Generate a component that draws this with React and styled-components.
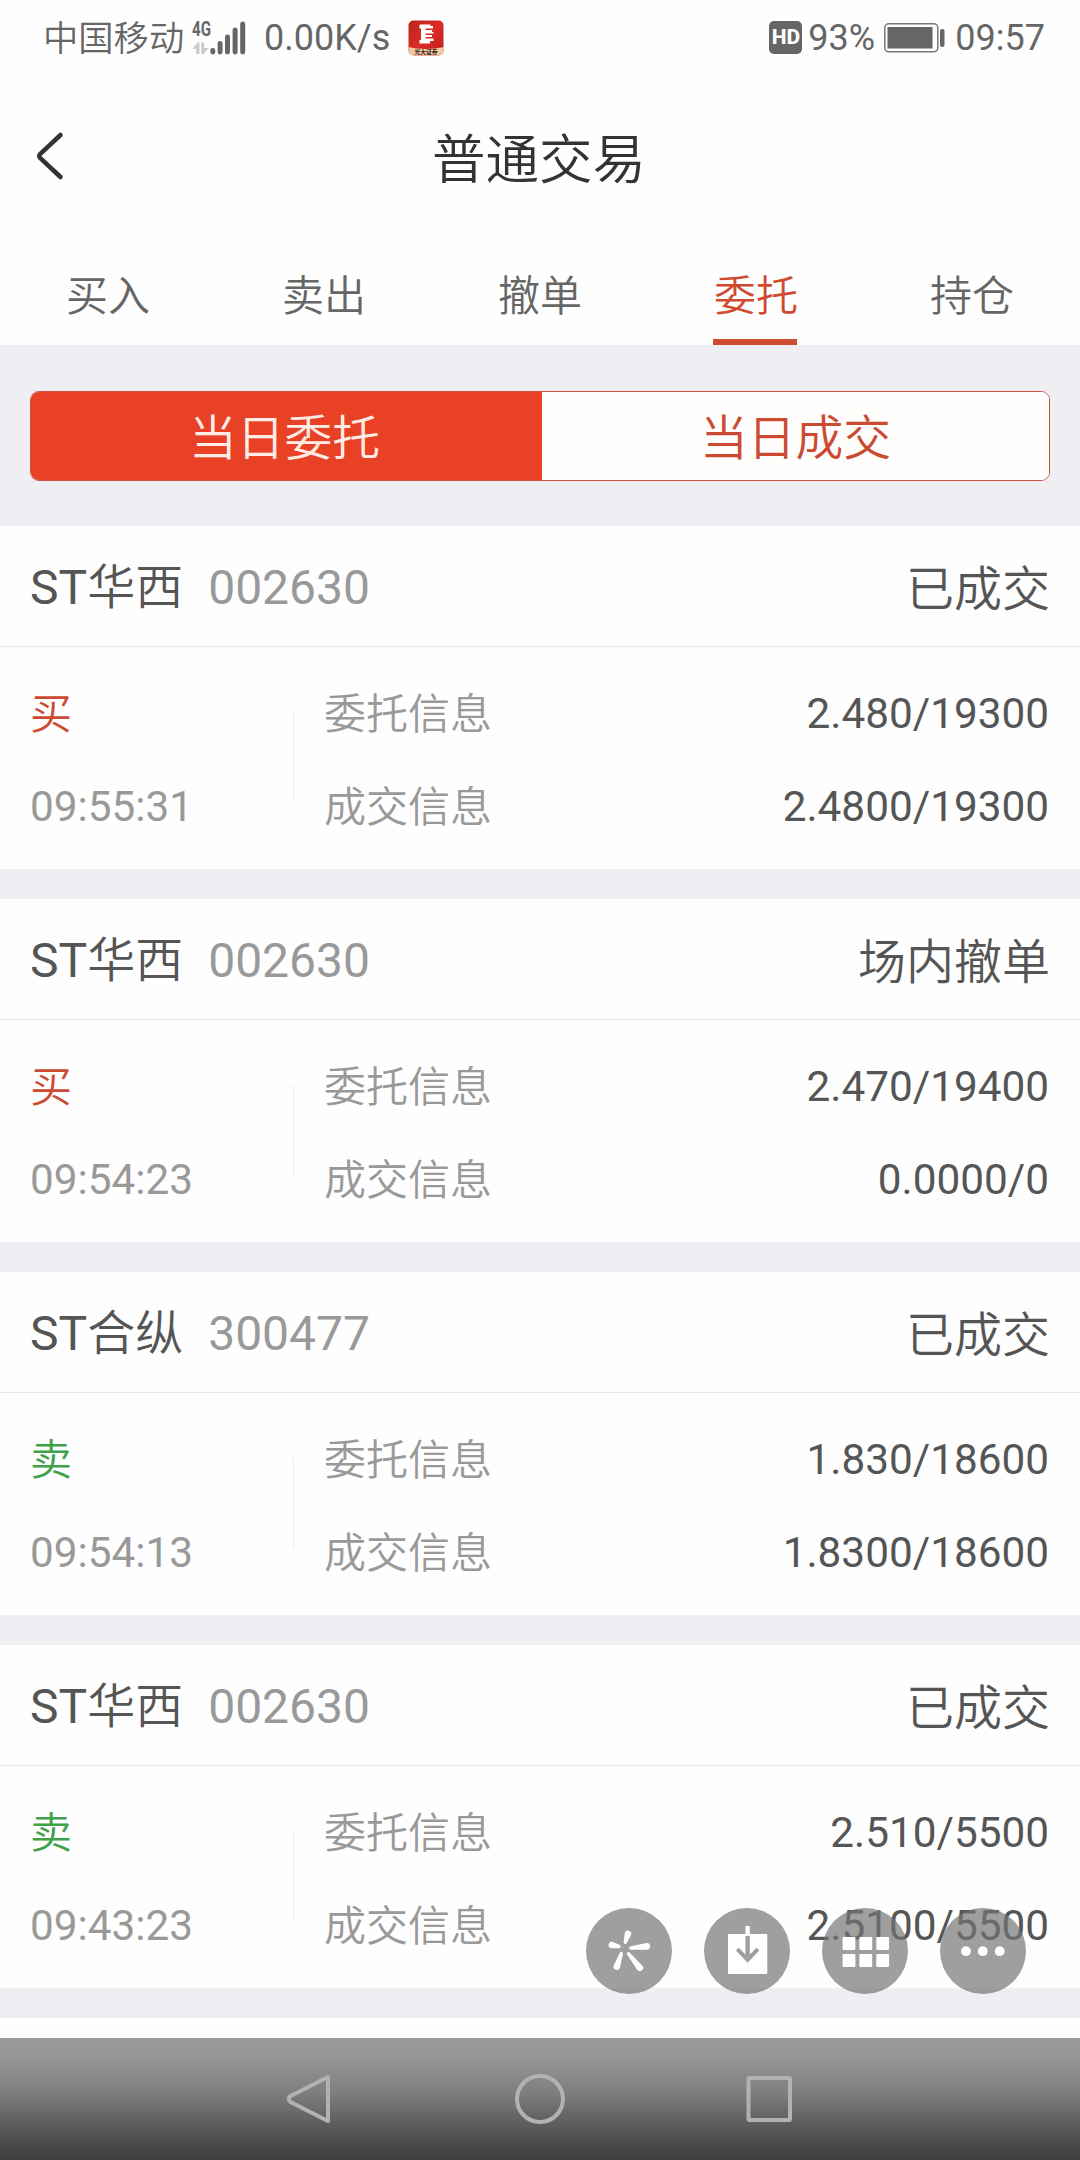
import React from "react";
import styled, { createGlobalStyle } from "styled-components";

const GlobalStyle = createGlobalStyle`
  * { box-sizing: border-box; }
  html, body { margin: 0; padding: 0; background: #fefefe; }
  body { font-family: Roboto, "Noto Sans CJK SC", sans-serif; }
`;

const Screen = styled.div`
  position: relative;
  display: flex;
  flex-direction: column;
  width: 1080px;
  height: 2160px;
  overflow: hidden;
  background: #fefefe;
`;

const Latin = styled.span`
  font-weight: 400;
`;

const StatusBar = styled.header`
  display: flex;
  justify-content: space-between;
  align-items: center;
  height: 75px;
  padding: 0 35px 0 43px;
  color: #666;
  font-size: 36px;
  line-height: 44px;
  white-space: nowrap;
`;

const StatusGroup = styled.div`
  display: flex;
  align-items: center;
`;

const Carrier = styled.span`
  width: 147px;
  padding-top: 2px;
  font-size: 35.3px;
  font-weight: 350;
`;

const Signal = styled.svg`
  width: 56px;
  height: 36px;
  margin-right: 18px;
  overflow: visible;
`;

const Speed = styled.span`
  width: 144px;
`;

const BrokerIcon = styled.svg`
  width: 36px;
  height: 36px;
`;

const HdBadge = styled.span`
  display: flex;
  align-items: center;
  justify-content: center;
  width: 33px;
  height: 33px;
  margin-right: 6px;
  border-radius: 5px;
  background: #666;
  color: #fff;
  font-size: 21px;
  font-weight: 800;
  line-height: 33px;
`;

const Percent = styled.span`
  width: 76px;
`;

const Battery = styled.svg`
  width: 61px;
  height: 30px;
  margin-right: 10px;
`;

const TitleBar = styled.div`
  display: grid;
  grid-template-columns: 100px 1fr 102px;
  align-items: center;
  height: 165px;
`;

const BackButton = styled.button`
  display: flex;
  padding: 0 0 3px 34px;
  border: 0;
  background: none;
`;

const Title = styled.h1`
  margin: 0;
  padding-top: 6px;
  color: #333;
  font-size: 53.5px;
  font-weight: 350;
  line-height: 80px;
  text-align: center;
`;

const Tabs = styled.nav`
  display: flex;
  height: 105px;
`;

const Tab = styled.div`
  display: flex;
  flex: 1;
  justify-content: center;
`;

const TabLabel = styled.span`
  width: 84px;
  height: 105px;
  margin: 0 1px 0 -1px;
  padding-top: 4px;
  border-bottom: 6px solid ${(p) => (p.$active ? "#d04a2f" : "transparent")};
  color: ${(p) => (p.$active ? "#d04a2f" : "#666")};
  font-size: 42px;
  font-weight: 350;
  line-height: 106px;
  text-indent: 1px;
  white-space: nowrap;
`;

const SegmentArea = styled.section`
  height: 181px;
  padding: 46px 30px 45px;
  background: #efeff3;
`;

const Segmented = styled.div`
  display: flex;
  height: 90px;
  overflow: hidden;
  border: 1px solid #c9533f;
  border-radius: 9px;
  background: #fffefd;
`;

const Segment = styled.button`
  flex: 1 1 ${(p) => (p.$active ? "4px" : "0")};
  padding: 7px ${(p) => (p.$active ? "4px" : "0")} 0 0;
  border: 0;
  background: ${(p) => (p.$active ? "#e84125" : "#fffefd")};
  color: ${(p) => (p.$active ? "#ffece4" : "#cb4a32")};
  font: 350 47.8px/81px Roboto, "Noto Sans CJK SC", sans-serif;
`;

const List = styled.main`
  display: flex;
  flex: 1;
  flex-direction: column;
  gap: 30px;
  min-height: 0;
  overflow: hidden;
  background: #efeff3;
`;

const Card = styled.article`
  flex: none;
  height: 343px;
  background: #fefefe;
`;

const CardHead = styled.div`
  display: flex;
  align-items: center;
  justify-content: space-between;
  height: 121px;
  padding: 4px 30px 0;
  border-bottom: 1px solid #e9e9e9;
  color: #555;
  font-size: 48px;
  font-weight: 350;
  line-height: 70px;
`;

const Stock = styled.div`
  display: flex;
  gap: 25px;
`;

const Code = styled.span`
  color: #999;
  font-weight: 400;
`;

const Status = styled.span`
  padding-top: 3px;
`;

const CardBody = styled.div`
  display: grid;
  grid-template-columns: 264px 30px 1fr;
  padding: 20px 31px 16px 30px;
  font-size: 42.3px;
  line-height: 93px;
`;

const Column = styled.div`
  display: flex;
  flex-direction: column;
`;

const Side = styled.span`
  height: 93px;
  color: ${(p) => (p.$side === "买" ? "#cb4a32" : "#3fa24a")};
  font-size: 42px;
  font-weight: 350;
  line-height: 96px;
`;

const Time = styled.span`
  color: #999;
`;

const Divider = styled.div`
  width: 1px;
  height: 90px;
  margin-top: 45px;
  margin-left: -1px;
  background: #ececec;
`;

const InfoRow = styled.div`
  display: flex;
  justify-content: space-between;
  height: 93px;
`;

const Label = styled.span`
  color: #999;
  font-size: 42px;
  font-weight: 350;
  line-height: 96px;
`;

const Value = styled.span`
  color: #555;
`;

const FloatingTools = styled.div`
  position: absolute;
  top: 1908px;
  right: 54px;
  display: flex;
  gap: 32px;
`;

const Tool = styled.button`
  width: 86px;
  height: 86px;
  padding: 0;
  border: 0;
  border-radius: 50%;
  background: rgba(116, 116, 116, 0.69);
`;

const ToolIcon = styled.svg`
  display: block;
  width: 86px;
  height: 86px;
  fill: #fff;
`;

const SystemNav = styled.footer`
  display: flex;
  flex: none;
  align-items: center;
  gap: 181px;
  height: 122px;
  padding-left: 284px;
  background: linear-gradient(#999 0%, #979797 12%, #8e8e8e 27%, #7e7e7e 45%, #5e5e5e 70%, #4a4a4a 86%, #3f3f3f 100%);
`;

const NavIcon = styled.svg`
  width: 50px;
  height: 50px;
  fill: none;
  stroke: #b2b2b2;
  stroke-width: 4;
  stroke-linejoin: round;
`;

const tabs = ["买入", "卖出", "撤单", "委托", "持仓"];

const orders = [
  { name: "华西", code: "002630", status: "已成交", side: "买", time: "09:55:31", ordered: "2.480/19300", filled: "2.4800/19300" },
  { name: "华西", code: "002630", status: "场内撤单", side: "买", time: "09:54:23", ordered: "2.470/19400", filled: "0.0000/0" },
  { name: "合纵", code: "300477", status: "已成交", side: "卖", time: "09:54:13", ordered: "1.830/18600", filled: "1.8300/18600" },
  { name: "华西", code: "002630", status: "已成交", side: "卖", time: "09:43:23", ordered: "2.510/5500", filled: "2.5100/5500" },
];

// Each ray runs from a narrow inner end to a rounded outer end.
const rays = [
  [39.3, 34.3, 41.9, 26],
  [33, 38.5, 25.8, 37],
  [45, 40, 60.8, 38.4],
  [35.3, 45.5, 30.8, 58.6],
  [42.5, 45.8, 53.8, 59.8],
];

function rayPath([x1, y1, x2, y2]) {
  const length = Math.hypot(x2 - x1, y2 - y1);
  const nx = -(y2 - y1) / length;
  const ny = (x2 - x1) / length;
  const a = 1.7;
  const b = 3.3;
  return `M${x1 + nx * a} ${y1 + ny * a}L${x2 + nx * b} ${y2 + ny * b}A${b} ${b} 0 0 0 ${x2 - nx * b} ${y2 - ny * b}L${x1 - nx * a} ${y1 - ny * a}A${a} ${a} 0 0 0 ${x1 + nx * a} ${y1 + ny * a}Z`;
}

function OrderCard({ order }) {
  return (
    <Card>
      <CardHead>
        <Stock>
          <span><Latin>ST</Latin>{order.name}</span>
          <Code>{order.code}</Code>
        </Stock>
        <Status>{order.status}</Status>
      </CardHead>
      <CardBody>
        <Column>
          <Side $side={order.side}>{order.side}</Side>
          <Time>{order.time}</Time>
        </Column>
        <Divider />
        <Column>
          <InfoRow><Label>委托信息</Label><Value>{order.ordered}</Value></InfoRow>
          <InfoRow><Label>成交信息</Label><Value>{order.filled}</Value></InfoRow>
        </Column>
      </CardBody>
    </Card>
  );
}

export default function App() {
  return (
    <>
      <GlobalStyle />
      <Screen>
        <StatusBar>
          <StatusGroup>
            <Carrier>中国移动</Carrier>
            <Signal viewBox="0 0 56 36">
              <text x="2" y="16" fontSize="21" fontWeight="700" fill="#666" textLength="19" lengthAdjust="spacingAndGlyphs">4G</text>
              <g fill="#ccc">
                <path d="M2.500 29l5-6.500h2V34H6.200v-5z" />
                <path d="M11.200 22.500h3V28h4.300l-5 6h-2.300z" />
              </g>
              <g fill="#666">
                <rect x="20.3" y="28" width="5" height="6.500" rx="2.4" />
                <rect x="27.600" y="21" width="5" height="13.500" rx="2.4" />
                <rect x="35" y="14.500" width="5" height="20" rx="2.4" />
                <rect x="42.600" y="7.500" width="5" height="27" rx="2.4" />
                <rect x="50.200" y="1.500" width="5" height="33" rx="2.4" />
              </g>
            </Signal>
            <Speed>0.00K/s</Speed>
            <BrokerIcon viewBox="0 0 36 36">
              <defs>
                <linearGradient id="brokerRed" x1="0" y1="0" x2="1" y2="1">
                  <stop offset="0" stopColor="#b8241f" />
                  <stop offset="0.5" stopColor="#dc2b26" />
                  <stop offset="1" stopColor="#b91d19" />
                </linearGradient>
                <clipPath id="brokerClip"><rect width="35" height="35" x="0.5" y="0.5" rx="5" /></clipPath>
              </defs>
              <g clipPath="url(#brokerClip)">
                <rect width="36" height="36" fill="url(#brokerRed)" />
                <path d="M0 27Q18 31 36 27V36H0Z" fill="#efc9a0" />
                <path d="M11.5 4.500H22.500V6H25V8.500H17.500V10H24V12H25.500V13.500H17.500V15H24V17H17.500V18.500H25.500V21H22V23.500H11.500V20H13V8.500H11.500Z" fill="#fff" />
                <text x="18" y="34.300" fontSize="5.800" fontWeight="700" textAnchor="middle" fill="#3c2019">光大证券</text>
              </g>
            </BrokerIcon>
          </StatusGroup>
          <StatusGroup>
            <HdBadge>HD</HdBadge>
            <Percent>93%</Percent>
            <Battery viewBox="0 0 61 30">
              <rect x="0.8" y="0.8" width="53" height="28" rx="4" fill="none" stroke="#777" strokeWidth="1.5" />
              <rect x="3.5" y="4" width="45" height="21.5" fill="#666" />
              <rect x="56" y="6" width="4.5" height="18" rx="2" fill="#666" />
            </Battery>
            <span>09:57</span>
          </StatusGroup>
        </StatusBar>
        <TitleBar>
          <BackButton aria-label="返回">
            <svg width="32" height="50" viewBox="0 0 32 50" fill="none" stroke="#333" strokeWidth="4.5" strokeLinecap="round" strokeLinejoin="round">
              <path d="M26.5 4 6.3 22.8Q4 25 6.3 27.2L26.5 46" />
            </svg>
          </BackButton>
          <Title>普通交易</Title>
        </TitleBar>
        <Tabs>
          {tabs.map((tab) => (
            <Tab key={tab}><TabLabel $active={tab === "委托"}>{tab}</TabLabel></Tab>
          ))}
        </Tabs>
        <SegmentArea>
          <Segmented>
            <Segment $active>当日委托</Segment>
            <Segment>当日成交</Segment>
          </Segmented>
        </SegmentArea>
        <List>
          {orders.map((order) => <OrderCard key={order.time} order={order} />)}
          <Card />
        </List>
        <SystemNav>
          <NavIcon viewBox="0 0 50 50"><path d="M44 3V47L6.5 28Q3 25 6.5 22Z" /></NavIcon>
          <NavIcon viewBox="0 0 50 50"><circle cx="25" cy="25" r="23" /></NavIcon>
          <NavIcon viewBox="0 0 50 50"><rect x="2.5" y="4" width="41.5" height="42" rx="1" /></NavIcon>
        </SystemNav>
        <FloatingTools>
          <Tool>
            <ToolIcon viewBox="0 0 86 86">{rays.map((ray) => <path key={ray[0]} d={rayPath(ray)} />)}</ToolIcon>
          </Tool>
          <Tool>
            <ToolIcon viewBox="0 0 86 86">
              <path d="M41.4 18h4.4v8H62a1.3 1.3 0 0 1 1.3 1.3V64.7a1.3 1.3 0 0 1-1.3 1.3H25.3A1.3 1.3 0 0 1 24 64.7V27.3A1.3 1.3 0 0 1 25.3 26H41.4ZM41.4 28V46.5L34.8 39.8L32 42.6L43.6 54.7L55.3 42.6L52.5 39.8L45.8 46.5V28Z" fillRule="evenodd" />
            </ToolIcon>
          </Tool>
          <Tool>
            <ToolIcon viewBox="0 0 86 86">
              {[29, 46].map((y) => [20.6, 37.4, 54.3].map((x) => <rect key={`${x}-${y}`} x={x} y={y} width="12.8" height="12.9" rx="0.8" />))}
            </ToolIcon>
          </Tool>
          <Tool>
            <ToolIcon viewBox="0 0 86 86">
              {[26, 42.8, 59.7].map((x) => <circle key={x} cx={x} cy="43.2" r="4.9" />)}
            </ToolIcon>
          </Tool>
        </FloatingTools>
      </Screen>
    </>
  );
}
